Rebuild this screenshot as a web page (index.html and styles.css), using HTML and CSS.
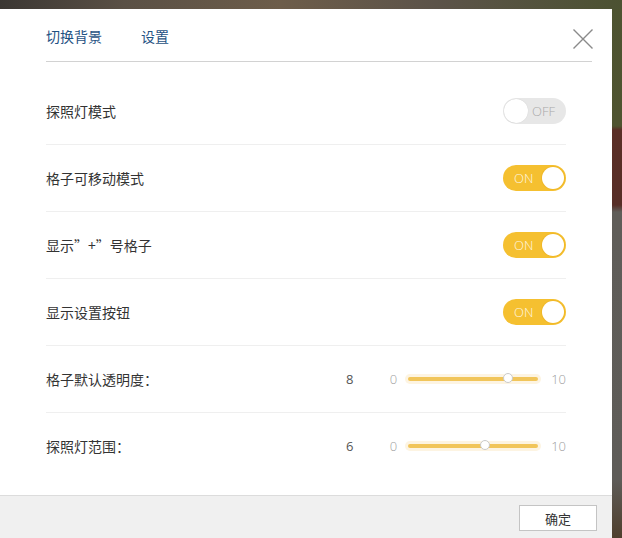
FILE: index.html
```html
<!DOCTYPE html>
<html lang="zh-CN">
<head>
  <meta charset="utf-8">
  <title>设置</title>
  <link rel="stylesheet" href="styles.css">
</head>
<body>
  <div class="dialog">
    <div class="dialog-head">
      <span class="tab">切换背景</span>
      <span class="tab">设置</span>
      <button class="close" aria-label="关闭">
        <svg width="20" height="20" viewBox="0 0 20 20">
          <path d="M0.5 0.5 L19.5 19.5 M19.5 0.5 L0.5 19.5" stroke="#8a8a8a" stroke-width="1.4" fill="none"/>
        </svg>
      </button>
    </div>

    <div class="settings">
      <div class="row">
        <span class="label">探照灯模式</span>
        <span class="switch"><span class="switch-text">OFF</span><span class="knob"></span></span>
      </div>
      <div class="row">
        <span class="label">格子可移动模式</span>
        <span class="switch on"><span class="switch-text">ON</span><span class="knob"></span></span>
      </div>
      <div class="row">
        <span class="label">显示”+”号格子</span>
        <span class="switch on"><span class="switch-text">ON</span><span class="knob"></span></span>
      </div>
      <div class="row">
        <span class="label">显示设置按钮</span>
        <span class="switch on"><span class="switch-text">ON</span><span class="knob"></span></span>
      </div>
      <div class="row">
        <span class="label">格子默认透明度：</span>
        <span class="value">8</span>
        <span class="range">
          <span class="range-min">0</span>
          <span class="track"><span class="thumb" style="left: 77%"></span></span>
          <span class="range-max">10</span>
        </span>
      </div>
      <div class="row">
        <span class="label">探照灯范围：</span>
        <span class="value">6</span>
        <span class="range">
          <span class="range-min">0</span>
          <span class="track"><span class="thumb" style="left: 59%"></span></span>
          <span class="range-max">10</span>
        </span>
      </div>
    </div>

    <div class="dialog-foot">
      <button class="ok">确定</button>
    </div>
  </div>
</body>
</html>
```

FILE: styles.css
```css
html, body {
  height: 100%;
}

body {
  margin: 0;
  overflow: hidden;
  font-family: "Noto Sans CJK SC", "Noto Sans", sans-serif;
  background:
    linear-gradient(to right, #3b3733 0%, #5a5045 20%, #6d5d4a 45%, #5c5349 70%, #4c5232 100%) top left / 100% 9px no-repeat,
    linear-gradient(to bottom, #4d5331 0px, #4f5430 126px, #5a2e26 130px, #572e27 205px, #5f5d59 212px, #5e5c58 480px, #4f3f2d 538px);
}

/* 弹窗 */
.dialog {
  position: relative;
  width: 612px;
  margin-top: 9px;
  background: #fff;
}

.dialog-head {
  display: flex;
  align-items: center;
  gap: 39px;
  height: 53px;
  margin: 0 20px 0 46px;
  border-bottom: 1px solid #d2d2d2;
  box-sizing: border-box;
  padding-top: 2px;
}

.tab {
  font-size: 14px;
  color: #1f5283;
  cursor: pointer;
}

.close {
  position: absolute;
  top: 20px;
  right: 19px;
  width: 20px;
  height: 20px;
  padding: 0;
  border: 0;
  background: none;
  cursor: pointer;
}

.close svg {
  display: block;
}

.settings {
  padding: 16px 46px;
}

.row {
  display: flex;
  align-items: center;
  height: 66px;
  border-bottom: 1px solid #efefef;
}

.row:last-child {
  border-bottom: 0;
}

.label {
  flex: 1;
  font-size: 14px;
  color: #333;
}

/* 开关 */
.switch {
  position: relative;
  display: flex;
  align-items: center;
  width: 63px;
  height: 26px;
  border-radius: 13px;
  background: #e7e7e7;
  box-sizing: border-box;
  cursor: pointer;
}

.switch .knob {
  position: absolute;
  top: 1px;
  left: 1px;
  width: 24px;
  height: 24px;
  border-radius: 50%;
  background: #fff;
  box-shadow: 0 0 1px rgba(0, 0, 0, 0.15);
}

.switch-text {
  margin-left: 29px;
  font-family: "Open Sans", "Noto Sans", sans-serif;
  font-weight: 300;
  font-size: 13px;
  color: #a9a9a9;
}

.switch.on {
  background: #f5c030;
}

.switch.on .knob {
  left: auto;
  right: 2px;
  top: 2px;
  width: 22px;
  height: 22px;
  box-shadow: 0 0 0 1px #f0b828;
}

.switch.on .switch-text {
  margin-left: 11px;
  color: #fff7e0;
}

/* 滑块 */
.value {
  width: 20px;
  margin-right: 30px;
  text-align: center;
  font-family: "Open Sans", "Noto Sans", sans-serif;
  font-size: 13px;
  color: #555;
}

.range {
  display: flex;
  align-items: center;
  font-family: "Open Sans", "Noto Sans", sans-serif;
  font-size: 13px;
  font-weight: 300;
  color: #9e9e9e;
}

.range-min {
  margin-right: 11px;
}

.range-max {
  margin-left: 13px;
}

.track {
  position: relative;
  width: 130px;
  height: 4px;
  border-radius: 2px;
  background: #f1c55a;
  box-shadow: 0 0 0 3px #fdf4e2;
}

.thumb {
  position: absolute;
  top: -4px;
  width: 10px;
  height: 10px;
  margin-left: -5px;
  border-radius: 50%;
  background: #fff;
  border: 1px solid #c9c9c9;
  box-sizing: border-box;
}

/* 底部 */
.dialog-foot {
  display: flex;
  justify-content: flex-end;
  height: 48px;
  padding: 9px 15px 0 0;
  box-sizing: border-box;
  background: #f0f0f0;
  border-top: 1px solid #dcdcdc;
}

.ok {
  width: 78px;
  height: 26px;
  padding: 0;
  border: 1px solid #c4c4c4;
  background: #fff;
  font-family: "Noto Sans CJK SC", sans-serif;
  font-size: 13px;
  color: #333;
  cursor: pointer;
}
```
